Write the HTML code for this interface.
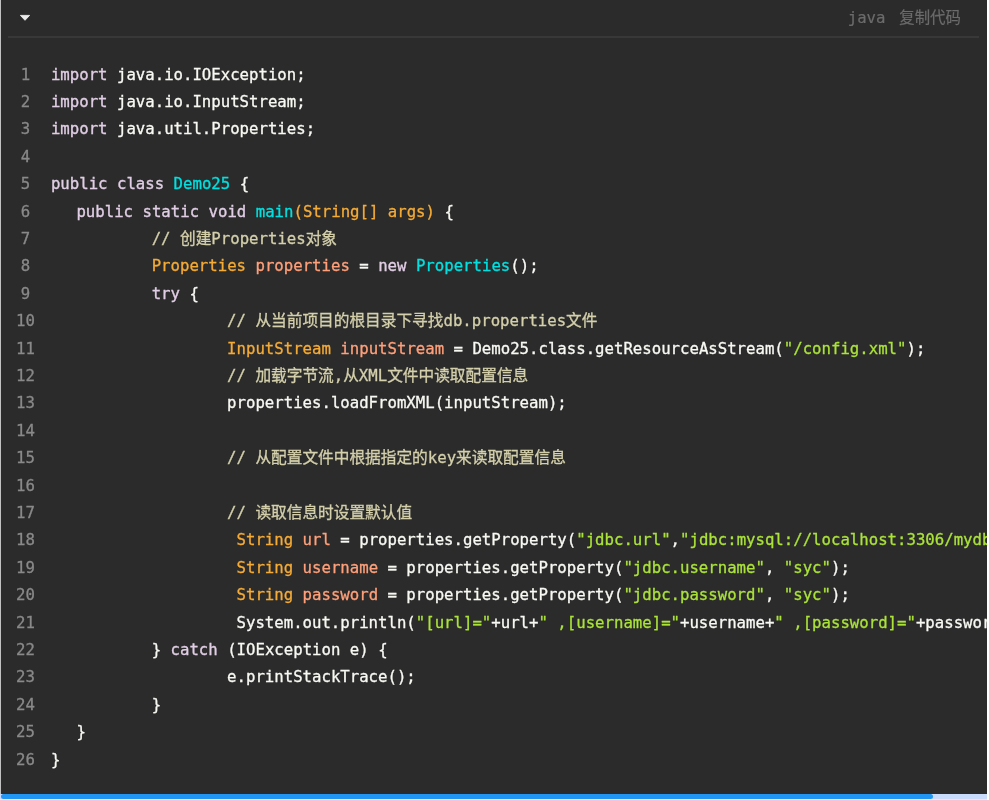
<!DOCTYPE html>
<html lang="zh-CN">
<head>
<meta charset="utf-8">
<title>java code</title>
<style>
html,body{margin:0;padding:0;}
body{width:989px;height:800px;overflow:hidden;background:#fff;position:relative;
 font-family:"DejaVu Sans Mono","Liberation Mono","Noto Sans CJK SC",monospace;}
.edge{position:absolute;left:0;top:0;width:1.3px;height:793.6px;background:#c2c2c2;}
.block{position:absolute;left:1.3px;top:0;width:985.5px;height:793.6px;background:#2b2b2b;overflow:hidden;}
.tri{position:absolute;left:18.1px;top:14.0px;width:12px;height:8px;}
.hdr{position:absolute;right:25.6px;top:3.7px;-webkit-text-stroke:0.2px;height:27.36px;line-height:27.36px;font-size:15.68px;color:#6b6b6b;white-space:pre;}
.hdr .cp{margin-left:4.6px;font-size:15.4px;}
.sep{position:absolute;left:6.5px;top:36.2px;width:971px;height:1.5px;background:#383838;}
.ln{-webkit-text-stroke:0.3px;position:absolute;left:0.3px;width:48.4px;text-align:center;color:#898989;font-size:15.68px;height:27.4px;line-height:27.4px;}
.l{position:absolute;white-space:pre;color:#f9f9f4;-webkit-text-stroke:0.3px;font-size:15.68px;height:27.4px;line-height:27.4px;}
.k{color:#e1cee5;} .t{color:#00e0e0;} .p{color:#f5ab35;} .v{color:#ffa07a;} .s{color:#abe338;} .c{color:#d4d0ab;}
.txt{position:absolute;left:0;top:0;width:985.5px;height:793.6px;will-change:transform;}
.track{position:absolute;left:0;top:793.6px;width:987px;height:5px;background:#c8dbfc;}
.under{position:absolute;left:0;top:798.6px;width:987px;height:1.4px;background:#dcebfd;}
.thumb{position:absolute;left:0.8px;top:793.6px;width:932.4px;height:5px;background:#2196f3;border-radius:2.5px;}
</style>
</head>
<body>
<div class="edge"></div>
<div class="block">
<svg class="tri" viewBox="0 0 12 8"><path d="M1.4 1.4 L10.6 1.4 L6 6.3 Z" fill="#ececec" stroke="#ececec" stroke-width="0.9" stroke-linejoin="round"/></svg>
<div class="sep"></div>
<div class="txt">
<div class="hdr"><span class="lang">java</span><span class="cp"> 复制代码</span></div>
<div class="ln" style="top:60.60px">1</div><div class="l" style="top:60.60px;left:49.90px"><span class="k">import</span> java.io.IOException;</div>
<div class="ln" style="top:88.00px">2</div><div class="l" style="top:88.00px;left:49.90px"><span class="k">import</span> java.io.InputStream;</div>
<div class="ln" style="top:115.40px">3</div><div class="l" style="top:115.40px;left:49.90px"><span class="k">import</span> java.util.Properties;</div>
<div class="ln" style="top:142.80px">4</div><div class="l" style="top:142.80px;left:49.90px"></div>
<div class="ln" style="top:170.20px">5</div><div class="l" style="top:170.20px;left:49.90px"><span class="k">public</span> <span class="k">class</span> <span class="t">Demo25</span> {</div>
<div class="ln" style="top:197.60px">6</div><div class="l" style="top:197.60px;left:75.40px"><span class="k">public</span> <span class="k">static</span> <span class="k">void</span> <span class="t">main</span><span class="p">(String[] args)</span> {</div>
<div class="ln" style="top:225.00px">7</div><div class="l" style="top:225.00px;left:150.70px"><span class="c">// 创建Properties对象</span></div>
<div class="ln" style="top:252.40px">8</div><div class="l" style="top:252.40px;left:150.70px"><span class="p">Properties</span> <span class="v">properties</span> = <span class="k">new</span> <span class="t">Properties</span>();</div>
<div class="ln" style="top:279.80px">9</div><div class="l" style="top:279.80px;left:150.70px"><span class="k">try</span> {</div>
<div class="ln" style="top:307.20px">10</div><div class="l" style="top:307.20px;left:226.10px"><span class="c">// 从当前项目的根目录下寻找db.properties文件</span></div>
<div class="ln" style="top:334.60px">11</div><div class="l" style="top:334.60px;left:226.10px"><span class="p">InputStream</span> <span class="v">inputStream</span> = Demo25.class.getResourceAsStream(<span class="s">&quot;/config.xml&quot;</span>);</div>
<div class="ln" style="top:362.00px">12</div><div class="l" style="top:362.00px;left:226.10px"><span class="c">// 加载字节流,从XML文件中读取配置信息</span></div>
<div class="ln" style="top:389.40px">13</div><div class="l" style="top:389.40px;left:226.10px">properties.loadFromXML(inputStream);</div>
<div class="ln" style="top:416.80px">14</div><div class="l" style="top:416.80px;left:226.10px"></div>
<div class="ln" style="top:444.20px">15</div><div class="l" style="top:444.20px;left:226.10px"><span class="c">// 从配置文件中根据指定的key来读取配置信息</span></div>
<div class="ln" style="top:471.60px">16</div><div class="l" style="top:471.60px;left:226.10px"></div>
<div class="ln" style="top:499.00px">17</div><div class="l" style="top:499.00px;left:226.10px"><span class="c">// 读取信息时设置默认值</span></div>
<div class="ln" style="top:526.40px">18</div><div class="l" style="top:526.40px;left:235.53px"><span class="p">String</span> <span class="v">url</span> = properties.getProperty(<span class="s">&quot;jdbc.url&quot;</span>,<span class="s">&quot;jdbc:mysql://localhost:3306/mydb&quot;</span>);</div>
<div class="ln" style="top:553.80px">19</div><div class="l" style="top:553.80px;left:235.53px"><span class="p">String</span> <span class="v">username</span> = properties.getProperty(<span class="s">&quot;jdbc.username&quot;</span>, <span class="s">&quot;syc&quot;</span>);</div>
<div class="ln" style="top:581.20px">20</div><div class="l" style="top:581.20px;left:235.53px"><span class="p">String</span> <span class="v">password</span> = properties.getProperty(<span class="s">&quot;jdbc.password&quot;</span>, <span class="s">&quot;syc&quot;</span>);</div>
<div class="ln" style="top:608.60px">21</div><div class="l" style="top:608.60px;left:235.53px">System.out.println(<span class="s">&quot;[url]=&quot;</span>+url+<span class="s">&quot; ,[username]=&quot;</span>+username+<span class="s">&quot; ,[password]=&quot;</span>+password);</div>
<div class="ln" style="top:636.00px">22</div><div class="l" style="top:636.00px;left:150.70px">} <span class="k">catch</span> (IOException e) {</div>
<div class="ln" style="top:663.40px">23</div><div class="l" style="top:663.40px;left:226.10px">e.printStackTrace();</div>
<div class="ln" style="top:690.80px">24</div><div class="l" style="top:690.80px;left:150.70px">}</div>
<div class="ln" style="top:718.20px">25</div><div class="l" style="top:718.20px;left:75.40px">}</div>
<div class="ln" style="top:745.60px">26</div><div class="l" style="top:745.60px;left:49.90px">}</div>
</div>
</div>
<div class="track"></div>
<div class="under"></div>
<div class="thumb"></div>
</body>
</html>
